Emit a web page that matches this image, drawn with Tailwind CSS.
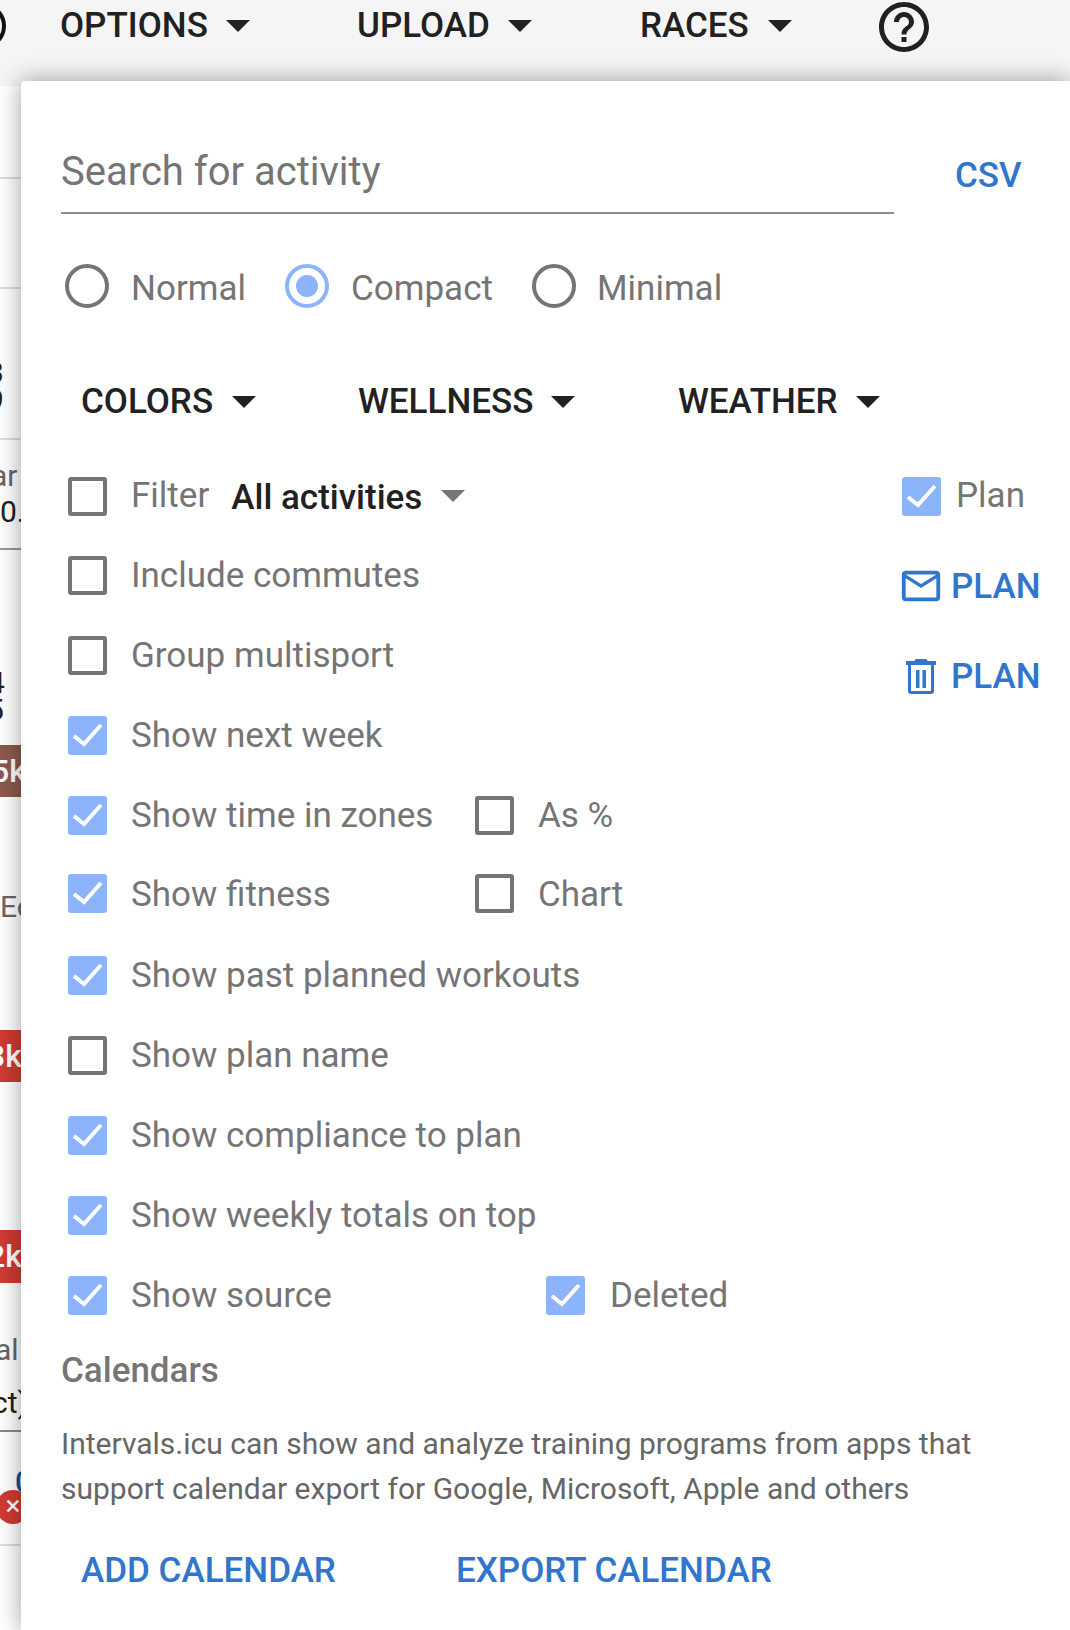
<!DOCTYPE html>
<html>
<head>
<meta charset="utf-8">
<script src="https://cdn.jsdelivr.net/npm/@tailwindcss/browser@4"></script>
</head>
<body class="bg-[#f5f5f5]">
<div class="w-[1070px] h-[1630px] overflow-hidden font-['Roboto',sans-serif] flex flex-col">
  <!-- Top bar -->
  <header class="relative h-[81px] shrink-0 flex items-start pt-[1px] text-[35px] font-medium text-[#212121] leading-[50px]">
    <div class="absolute left-[-44px] top-[3px] w-[50px] h-[46px] rounded-full border-[4px] border-[#111]"></div>
    <div class="flex items-center ml-[60px] w-[297px]"><span>OPTIONS</span><span class="ml-[18px] w-0 h-0 border-x-[12px] border-x-transparent border-t-[12px] border-t-[#212121]"></span></div>
    <div class="flex items-center w-[283px]"><span>UPLOAD</span><span class="ml-[18px] w-0 h-0 border-x-[12px] border-x-transparent border-t-[12px] border-t-[#212121]"></span></div>
    <div class="flex items-center w-[234px]"><span>RACES</span><span class="ml-[19px] w-0 h-0 border-x-[12px] border-x-transparent border-t-[12px] border-t-[#212121]"></span></div>
    <svg class="-mt-[4px]" width="60" height="60" viewBox="0 0 24 24" fill="#212121"><path d="M11 18h2v-2h-2v2zm1-16C6.48 2 2 6.48 2 12s4.48 10 10 10 10-4.48 10-10S17.52 2 12 2zm0 18c-4.41 0-8-3.59-8-8s3.59-8 8-8 8 3.59 8 8-3.59 8-8 8zm0-14c-2.21 0-4 1.79-4 4h2c0-1.1.9-2 2-2s2 .9 2 2c0 2-3 1.75-3 5h2c0-2.25 3-2.5 3-5 0-2.21-1.79-4-4-4z"/></svg>
  </header>

  <div class="flex flex-1 min-h-0">
    <!-- Peek of page behind the panel -->
    <div class="relative w-[21px] shrink-0 mt-[5px] bg-white overflow-hidden text-[30px] leading-none text-[#212121]">
      <div class="absolute left-0 right-0 top-[91px] h-[2px] bg-[#ddd]"></div>
      <div class="absolute left-0 right-0 top-[201px] h-[2px] bg-[#ddd]"></div>
      <span class="absolute left-[-13px] top-[272px]">3</span>
      <span class="absolute left-[-13px] top-[299px]">9</span>
      <div class="absolute left-0 right-0 top-[352px] h-[2px] bg-[#ddd]"></div>
      <span class="absolute left-[-9px] top-[375px] text-[#666]">ar</span>
      <span class="absolute left-0 top-[411px]">0.</span>
      <div class="absolute left-0 right-0 top-[462px] h-[2px] bg-[#999]"></div>
      <span class="absolute left-[-12px] top-[582px]">4</span>
      <span class="absolute left-[-13px] top-[609px]">5</span>
      <div class="absolute left-0 right-0 top-[659px] h-[52px] bg-[#8d5a4d] text-white font-medium text-[32px] leading-[52px]"><span class="absolute left-[-9px]">5k</span></div>
      <span class="absolute left-0 top-[806px] text-[#666]">Ec</span>
      <div class="absolute left-0 right-0 top-[944px] h-[52px] bg-[#d13a34] text-white font-medium text-[32px] leading-[52px]"><span class="absolute left-[-13px]">3k</span></div>
      <div class="absolute left-0 right-0 top-[1144px] h-[53px] bg-[#d13a34] text-white font-medium text-[32px] leading-[52px]"><span class="absolute left-[-13px]">2k</span></div>
      <span class="absolute left-[-5px] top-[1249px] text-[#666]">al</span>
      <span class="absolute left-[-8px] top-[1302px]">ct)</span>
      <div class="absolute left-0 right-0 top-[1344px] h-[2px] bg-[#888]"></div>
      <span class="absolute left-[15px] top-[1381px] text-[#134f9c] font-medium">0</span>
      <div class="absolute left-[-4px] top-[1404px] w-[34px] h-[34px] rounded-full bg-[#d13a34] text-white text-[28px] leading-[32px] text-center">×</div>
      <div class="absolute left-0 right-0 top-[1458px] h-[2px] bg-[#ddd]"></div>
    </div>

    <!-- Panel -->
    <main class="relative z-10 flex-1 bg-white rounded-tl-[4px] shadow-[0_0_24px_rgba(0,0,0,0.38)] pl-[40px] pr-[20px] text-[#757575] text-[35px] leading-[50px]">
      <!-- Search -->
      <div class="flex items-start h-[133px]">
        <div class="w-[833px] h-[133px] pt-[62px] border-b-2 border-[#8f8f8f] text-[40px] leading-[58px]">Search for activity</div>
        <span class="ml-[61px] mt-[70px] text-[#3076cc] font-medium leading-[50px]">CSV</span>
      </div>

      <!-- Radios -->
      <div class="flex items-center mt-[50px] h-[44px] ml-[4px]">
        <span class="w-[44px] h-[44px] rounded-full border-[4px] border-[#757575]"></span>
        <span class="ml-[22px] w-[154px] mt-[6px]">Normal</span>
        <span class="w-[44px] h-[44px] rounded-full border-[4px] border-[#8cb4fb] flex items-center justify-center"><span class="w-[22px] h-[22px] rounded-full bg-[#8cb4fb]"></span></span>
        <span class="ml-[22px] w-[181px] mt-[6px]">Compact</span>
        <span class="w-[44px] h-[44px] rounded-full border-[4px] border-[#757575]"></span>
        <span class="ml-[21px] mt-[6px]">Minimal</span>
      </div>

      <!-- Dropdowns -->
      <div class="flex items-center mt-[69px] h-[50px] ml-[20px] text-[#212121] font-medium">
        <div class="flex items-center w-[277px]"><span>COLORS</span><span class="ml-[19px] w-0 h-0 border-x-[12px] border-x-transparent border-t-[12px] border-t-[#212121]"></span></div>
        <div class="flex items-center w-[320px]"><span>WELLNESS</span><span class="ml-[18px] w-0 h-0 border-x-[12px] border-x-transparent border-t-[12px] border-t-[#212121]"></span></div>
        <div class="flex items-center"><span>WEATHER</span><span class="ml-[18px] w-0 h-0 border-x-[12px] border-x-transparent border-t-[12px] border-t-[#212121]"></span></div>
      </div>

      <div class="flex justify-between">
        <!-- Left options -->
        <div class="flex flex-col pl-[7px] mt-[31px]">
          <div class="flex items-center h-[76px]">
            <span class="w-[39px] h-[39px] rounded-[3px] border-[4px] border-[#757575] mr-[24px]"></span>
            <span class="mr-[22px]">Filter</span>
            <span class="font-medium text-[#212121] mr-[19px] mt-[3px]">All activities</span>
            <span class="w-0 h-0 border-x-[12px] border-x-transparent border-t-[12px] border-t-[#757575]"></span>
          </div>
          <div class="flex items-center h-[76px] mt-[3px]">
            <span class="w-[39px] h-[39px] rounded-[3px] border-[4px] border-[#757575] mr-[24px]"></span>
            <span class="mt-[2px]">Include commutes</span>
          </div>
          <div class="flex items-center h-[76px] mt-[4px]">
            <span class="w-[39px] h-[39px] rounded-[3px] border-[4px] border-[#757575] mr-[24px]"></span>
            <span class="mt-[2px]">Group multisport</span>
          </div>
          <div class="flex items-center h-[76px] mt-[4px]">
            <svg class="mr-[24px] shrink-0" width="39" height="39" viewBox="0 0 39 39"><rect width="39" height="39" rx="3" fill="#8cb4fb"/><path d="M6 20l10 8L33 9" fill="none" stroke="#fff" stroke-width="4"/></svg>
            <span class="mt-[2px]">Show next week</span>
          </div>
          <div class="flex items-center h-[76px] mt-[4px]">
            <svg class="mr-[24px] shrink-0" width="39" height="39" viewBox="0 0 39 39"><rect width="39" height="39" rx="3" fill="#8cb4fb"/><path d="M6 20l10 8L33 9" fill="none" stroke="#fff" stroke-width="4"/></svg>
            <span class="w-[344px] mt-[2px]">Show time in zones</span>
            <span class="w-[39px] h-[39px] rounded-[3px] border-[4px] border-[#757575] mr-[24px]"></span>
            <span class="mt-[2px]">As %</span>
          </div>
          <div class="flex items-center h-[76px] mt-[2px]">
            <svg class="mr-[24px] shrink-0" width="39" height="39" viewBox="0 0 39 39"><rect width="39" height="39" rx="3" fill="#8cb4fb"/><path d="M6 20l10 8L33 9" fill="none" stroke="#fff" stroke-width="4"/></svg>
            <span class="w-[344px] mt-[4px]">Show fitness</span>
            <span class="w-[39px] h-[39px] rounded-[3px] border-[4px] border-[#757575] mr-[24px]"></span>
            <span class="mt-[4px]">Chart</span>
          </div>
          <div class="flex items-center h-[76px] mt-[6px]">
            <svg class="mr-[24px] shrink-0" width="39" height="39" viewBox="0 0 39 39"><rect width="39" height="39" rx="3" fill="#8cb4fb"/><path d="M6 20l10 8L33 9" fill="none" stroke="#fff" stroke-width="4"/></svg>
            <span class="mt-[2px]">Show past planned workouts</span>
          </div>
          <div class="flex items-center h-[76px] mt-[4px]">
            <span class="w-[39px] h-[39px] rounded-[3px] border-[4px] border-[#757575] mr-[24px]"></span>
            <span class="mt-[2px]">Show plan name</span>
          </div>
          <div class="flex items-center h-[76px] mt-[4px]">
            <svg class="mr-[24px] shrink-0" width="39" height="39" viewBox="0 0 39 39"><rect width="39" height="39" rx="3" fill="#8cb4fb"/><path d="M6 20l10 8L33 9" fill="none" stroke="#fff" stroke-width="4"/></svg>
            <span class="mt-[2px]">Show compliance to plan</span>
          </div>
          <div class="flex items-center h-[76px] mt-[4px]">
            <svg class="mr-[24px] shrink-0" width="39" height="39" viewBox="0 0 39 39"><rect width="39" height="39" rx="3" fill="#8cb4fb"/><path d="M6 20l10 8L33 9" fill="none" stroke="#fff" stroke-width="4"/></svg>
            <span class="mt-[2px]">Show weekly totals on top</span>
          </div>
          <div class="flex items-center h-[76px] mt-[4px]">
            <svg class="mr-[24px] shrink-0" width="39" height="39" viewBox="0 0 39 39"><rect width="39" height="39" rx="3" fill="#8cb4fb"/><path d="M6 20l10 8L33 9" fill="none" stroke="#fff" stroke-width="4"/></svg>
            <span class="w-[415px] mt-[2px]">Show source</span>
            <svg class="mr-[25px] shrink-0" width="39" height="39" viewBox="0 0 39 39"><rect width="39" height="39" rx="3" fill="#8cb4fb"/><path d="M6 20l10 8L33 9" fill="none" stroke="#fff" stroke-width="4"/></svg>
            <span class="mt-[2px]">Deleted</span>
          </div>
        </div>

        <!-- Right actions -->
        <div class="flex flex-col items-start w-[148px] mt-[31px]">
          <div class="flex items-center h-[76px]">
            <svg class="mr-[15px] shrink-0" width="39" height="39" viewBox="0 0 39 39"><rect width="39" height="39" rx="3" fill="#8cb4fb"/><path d="M6 20l10 8L33 9" fill="none" stroke="#fff" stroke-width="4"/></svg>
            <span>Plan</span>
          </div>
          <div class="flex items-center h-[50px] mt-[27px] -ml-[4px] text-[#3076cc] font-medium">
            <svg class="shrink-0" width="46" height="46" viewBox="0 0 24 24" fill="#3076cc"><path d="M20 4H4c-1.1 0-1.99.9-1.99 2L2 18c0 1.1.9 2 2 2h16c1.1 0 2-.9 2-2V6c0-1.1-.9-2-2-2zm0 14H4V8l8 5 8-5v10zm-8-7L4 6h16l-8 5z"/></svg>
            <span class="ml-[7px] mt-[2px]">PLAN</span>
          </div>
          <div class="flex items-center h-[50px] mt-[40px] ml-[4px] text-[#3076cc] font-medium">
            <svg class="shrink-0" width="30" height="35" viewBox="0 0 30 35" fill="#3076cc"><path d="M10 0h10l2 2h8v4H0V2h8zM2 6h3v26h20V6h3v26a3 3 0 0 1-3 3H5a3 3 0 0 1-3-3zM10 11h3.500v18h-3.500zM16.500 11h3.500v18h-3.500z"/></svg>
            <span class="ml-[15px] mt-[2px]">PLAN</span>
          </div>
        </div>
      </div>

      <div class="font-medium text-[#757575] mt-[13px] h-[50px]">Calendars</div>
      <p class="mt-[25px] text-[30px] leading-[45px] text-[#666] w-[960px]">Intervals.icu can show and analyze training programs from apps that support calendar export for Google, Microsoft, Apple and others</p>
      <div class="flex mt-[35px] ml-[20px] text-[#3076cc] font-medium">
        <span class="w-[375px]">ADD CALENDAR</span>
        <span>EXPORT CALENDAR</span>
      </div>
    </main>
  </div>
</div>
</body>
</html>
